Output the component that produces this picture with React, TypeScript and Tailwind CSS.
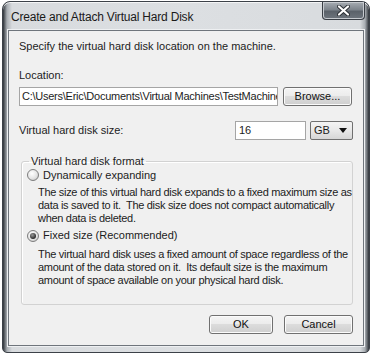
import React from "react";

const FONT = "font-['Liberation_Sans',Arial,sans-serif]";

function Radio({ checked }: { checked?: boolean }) {
  return (
    <span className="flex h-[12px] w-[12px] shrink-0 items-center justify-center rounded-full border border-[#7d7d7d] bg-[radial-gradient(circle_at_40%_35%,#ffffff_0%,#e4e4e4_55%,#b9b9b9_100%)]">
      {checked && (
        <span className="h-[6px] w-[6px] rounded-full bg-[radial-gradient(circle_at_40%_35%,#9a9a9a_0%,#2a2a2a_70%)]" />
      )}
    </span>
  );
}

function Button({ label, w }: { label: string; w: string }) {
  return (
    <button
      type="button"
      className={`${w} h-[19px] rounded-[3px] border border-[#707070] bg-[linear-gradient(#f4f4f4_0%,#ececec_45%,#dcdcdc_50%,#cfcfcf_100%)] text-[11px] text-[#111] shadow-[inset_0_0_0_1px_#fbfbfb]`}
    >
      {label}
    </button>
  );
}

export default function App() {
  return (
    <div className={`h-[360px] w-[377px] overflow-hidden bg-white pt-px pl-[2px] ${FONT}`}>
      <div className="flex h-[352px] w-[368px] flex-col rounded-t-[8px] rounded-b-[5px] border border-[#3c4148] bg-[linear-gradient(to_right,#2e3339_0px,#a9aeb3_4px,#d8dbde_9px,#dcdfe2_50%,#d8dbde_calc(100%-9px),#a9aeb3_calc(100%-4px),#2e3339_100%)] shadow-[inset_0_1px_0_#f4f5f6]">
        <div className="flex h-[28px] items-start justify-between pl-[8px]">
          <span className="mt-[8px] text-[12px] leading-[14px] tracking-[-0.2px] text-[#1a1a1a]">
            Create and Attach Virtual Hard Disk
          </span>
          <div className="mr-[4px] flex h-[18px] w-[43px] items-center justify-center rounded-b-[4px] border border-t-0 border-[#3a3f46] bg-[linear-gradient(#a7adb3_0%,#7d848c_45%,#5b626a_55%,#6d747c_100%)] shadow-[inset_0_0_0_1px_#c6cacf]">
            <svg width="13" height="11" viewBox="0 0 13 11">
              <path
                d="M2 1.5 L11 9.5 M11 1.5 L2 9.5"
                stroke="#2b2f34"
                strokeWidth="4"
                strokeLinecap="round"
              />
              <path
                d="M2 1.5 L11 9.5 M11 1.5 L2 9.5"
                stroke="#ffffff"
                strokeWidth="2.2"
                strokeLinecap="round"
              />
            </svg>
          </div>
        </div>

        <div className="mx-[5px] mb-[6px] flex flex-1 flex-col border border-[#6f757c] bg-[#f0f0f0] pl-[10px] pr-[10px] text-[11px] leading-[13.5px] text-[#1c1c1c] shadow-[0_0_0_1px_#eef0f2]">
          <p className="mt-[9px]">Specify the virtual hard disk location on the machine.</p>

          <p className="mt-[15px]">Location:</p>
          <div className="mt-[5px] flex items-center gap-[5px]">
            <div className="flex h-[19px] w-[259px] items-center overflow-hidden whitespace-nowrap border border-[#a5a5a5] bg-white pl-[2px] tracking-[-0.25px]">
              C:\Users\Eric\Documents\Virtual Machines\TestMachine
            </div>
            <Button label="Browse..." w="w-[69px]" />
          </div>

          <div className="mt-[15px] flex items-center">
            <span className="flex-1">Virtual hard disk size:</span>
            <div className="flex h-[19px] w-[71px] items-center border border-[#a5a5a5] bg-white pl-[3px]">
              16
            </div>
            <div className="ml-[4px] flex h-[19px] w-[43px] items-center justify-between rounded-[2px] border border-[#707070] bg-[linear-gradient(#f4f4f4_0%,#e8e8e8_50%,#d6d6d6_100%)] pr-[5px] pl-[3px]">
              <span>GB</span>
              <svg width="8" height="5" viewBox="0 0 8 5">
                <path d="M0 0 H8 L4 5 Z" fill="#111" />
              </svg>
            </div>
          </div>

          <fieldset className="mt-[15px] ml-[2px] h-[150px] rounded-[3px] border border-[#d2d2d2] pr-0 pl-[5px] shadow-[inset_1px_1px_0_#ffffff]">
            <legend className="ml-[2px] px-[2px]">Virtual hard disk format</legend>
            <div className="flex items-center gap-[4px]">
              <Radio />
              <span>Dynamically expanding</span>
            </div>
            <p className="mt-[4px] ml-[11px] whitespace-nowrap leading-[13px] tracking-[-0.3px]">
              The size of this virtual hard disk expands to a fixed maximum size as
              <br />
              data is saved to it.&nbsp; The disk size does not compact automatically
              <br />
              when data is deleted.
            </p>
            <div className="mt-[4px] flex items-center gap-[4px]">
              <Radio checked />
              <span>Fixed size (Recommended)</span>
            </div>
            <p className="mt-[5px] ml-[11px] whitespace-nowrap leading-[13px] tracking-[-0.3px]">
              The virtual hard disk uses a fixed amount of space regardless of the
              <br />
              amount of the data stored on it.&nbsp; Its default size is the maximum
              <br />
              amount of space available on your physical hard disk.
            </p>
          </fieldset>

          <div className="mt-[10px] flex justify-end gap-[11px]">
            <Button label="OK" w="w-[64px]" />
            <Button label="Cancel" w="w-[69px]" />
          </div>
        </div>
      </div>
    </div>
  );
}
